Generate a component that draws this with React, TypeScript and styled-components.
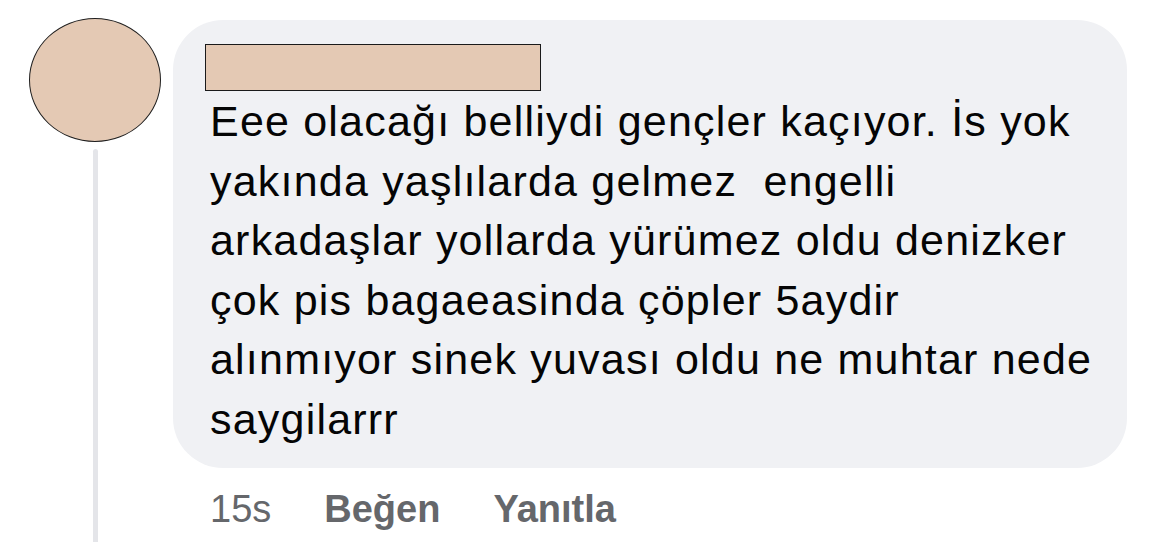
import styled, { createGlobalStyle } from "styled-components";

const GlobalStyle = createGlobalStyle`
  html, body {
    margin: 0;
    padding: 0;
    background: #ffffff;
  }
  body {
    font-family: "Liberation Sans", Arial, sans-serif;
    overflow: hidden;
  }
`;

const Page = styled.div`
  display: flex;
  width: 1169px;
  height: 542px;
  overflow: hidden;
`;

const Gutter = styled.div`
  display: flex;
  flex-direction: column;
  align-items: center;
  width: 132px;
  padding: 18px 12px 0 29px;
  flex-shrink: 0;
`;

const Avatar = styled.div`
  width: 132px;
  height: 124px;
  border-radius: 50%;
  background: #e4c9b4;
  border: 1.5px solid #1f1f1f;
  box-sizing: border-box;
  flex-shrink: 0;
`;

const ThreadLine = styled.div`
  width: 5px;
  flex: 1;
  margin-top: 7px;
  border-radius: 3px 3px 0 0;
  background: #e4e5e9;
`;

const Content = styled.div`
  display: flex;
  flex-direction: column;
  padding-top: 20px;
`;

const Bubble = styled.div`
  width: 954px;
  box-sizing: border-box;
  padding: 24px 0 18px 37px;
  background: #f0f1f4;
  border-radius: 50px;
`;

const NameBox = styled.div`
  width: 336px;
  height: 47px;
  margin-left: -5px;
  box-sizing: border-box;
  background: #e4c9b4;
  border: 1.5px solid #1a1a1a;
`;

const Body = styled.div`
  margin-top: 1px;
  color: #050505;
  font-size: 43px;
  line-height: 59.6px;
  letter-spacing: 1.2px;
`;

const Line = styled.div`
  white-space: pre;
`;

const Actions = styled.div`
  display: flex;
  gap: 53px;
  margin-top: 19px;
  padding-left: 37px;
  font-size: 38px;
  line-height: 44px;
  color: #65676b;
`;

const Action = styled.span<{ $strong?: boolean }>`
  font-weight: ${(p) => (p.$strong ? 700 : 400)};
`;

const lines = [
  "Eee olacağı belliydi gençler kaçıyor. İs yok",
  "yakında yaşlılarda gelmez  engelli",
  "arkadaşlar yollarda yürümez oldu denizker",
  "çok pis bagaeasinda çöpler 5aydir",
  "alınmıyor sinek yuvası oldu ne muhtar nede",
  "saygilarrr",
];

const App = () => {
  return (
    <>
      <GlobalStyle />
      <Page>
        <Gutter>
          <Avatar />
          <ThreadLine />
        </Gutter>
        <Content>
          <Bubble>
            <NameBox />
            <Body>
              {lines.map((text, i) => (
                <Line key={i}>{text}</Line>
              ))}
            </Body>
          </Bubble>
          <Actions>
            <Action>15s</Action>
            <Action $strong>Beğen</Action>
            <Action $strong>Yanıtla</Action>
          </Actions>
        </Content>
      </Page>
    </>
  );
};

export default App;
